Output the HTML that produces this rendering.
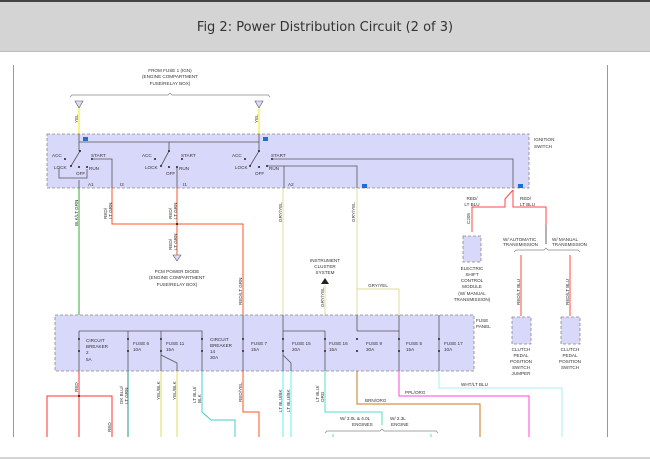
<!DOCTYPE html>
<html><head><meta charset="utf-8"><style>
html,body{margin:0;padding:0;background:#fff;width:650px;height:459px;overflow:hidden}
.hdr{position:absolute;left:0;top:0;width:650px;height:52px;background:#d4d4d4;border-top:2px solid #444;box-sizing:border-box;border-bottom:1px solid #bbb}
.hdr div{text-align:center;font:13px "DejaVu Sans","Liberation Sans",sans-serif;color:#333;margin-top:18px}
svg{position:absolute;left:0;top:0}
text{font-family:"Liberation Sans",sans-serif;font-size:4.6px;fill:#333}
</style></head><body>
<div class="hdr"><div>Fig 2: Power Distribution Circuit (2 of 3)</div></div>
<svg width="650" height="459" viewBox="0 0 650 459">
<line x1="13.5" y1="65" x2="13.5" y2="437" stroke="#999" stroke-width="1"/>
<line x1="607.5" y1="65" x2="607.5" y2="437" stroke="#999" stroke-width="1"/>
<line x1="0" y1="458" x2="650" y2="458" stroke="#aaa" stroke-width="1"/>
<text x="170" y="72" text-anchor="middle">FROM FUSE 1 (IGN)</text>
<text x="170" y="78" text-anchor="middle">(ENGINE COMPARTMENT</text>
<text x="170" y="85" text-anchor="middle">FUSE/RELAY BOX)</text>
<path d="M70 97 l2 -2 H168 l2 -2 l2 2 H268 l2 2" fill="none" stroke="#888" stroke-width="0.7"/>
<path d="M75 101 h8 l-4 7z M255 101 h8 l-4 7z" fill="#dde" stroke="#557" stroke-width="0.6"/>
<line x1="79" y1="108" x2="79" y2="134" stroke="#ee0" stroke-width="1"/>
<line x1="259" y1="108" x2="259" y2="134" stroke="#ee0" stroke-width="1"/>
<text transform="translate(78,123) rotate(-90)">YEL</text>
<text transform="translate(258,123) rotate(-90)">YEL</text>
<rect x="47" y="134" width="482" height="54" fill="#d8d8fa" stroke="#888" stroke-width="0.8" stroke-dasharray="3,2"/>
<text x="534" y="141">IGNITION</text><text x="534" y="148">SWITCH</text>
<rect x="83" y="137" width="5" height="4" fill="#1a6fd8"/><rect x="263" y="137" width="5" height="4" fill="#1a6fd8"/>
<rect x="362" y="184" width="5" height="4" fill="#1a6fd8"/><rect x="518" y="184" width="5" height="4" fill="#1a6fd8"/>
<g stroke="#555" stroke-width="0.8" fill="none">
<line x1="79" y1="142" x2="259" y2="142"/>
<line x1="79" y1="134" x2="79" y2="151"/><line x1="169" y1="142" x2="169" y2="151"/><line x1="259" y1="134" x2="259" y2="151"/>
<line x1="80" y1="151" x2="71" y2="166"/><line x1="169" y1="151" x2="161" y2="166"/><line x1="259" y1="151" x2="250" y2="166"/>
<path d="M92 159 H112 V188"/><path d="M59 168 V178 H87 V169"/>
<path d="M272 159 H513 V188"/>
<path d="M267 166 H357 V188 M284 166 V188"/>
<line x1="79" y1="180" x2="79" y2="188"/><line x1="177" y1="167" x2="177" y2="188"/>
</g>
<g fill="#222">
<circle cx="65" cy="159" r="1"/><circle cx="92" cy="159" r="1"/><circle cx="71" cy="166" r="1"/><circle cx="79" cy="167" r="1"/><circle cx="87" cy="167" r="1"/><circle cx="80" cy="151" r="1"/>
<circle cx="155" cy="159" r="1"/><circle cx="182" cy="159" r="1"/><circle cx="161" cy="166" r="1"/><circle cx="169" cy="167" r="1"/><circle cx="177" cy="167" r="1"/><circle cx="169" cy="151" r="1"/>
<circle cx="245" cy="159" r="1"/><circle cx="272" cy="159" r="1"/><circle cx="250" cy="166" r="1"/><circle cx="259" cy="167" r="1"/><circle cx="267" cy="166" r="1"/><circle cx="259" cy="151" r="1"/>
</g>
<text x="52" y="157">ACC</text><text x="91" y="157">START</text><text x="54" y="169">LOCK</text><text x="89" y="170">RUN</text><text x="76" y="175">OFF</text>
<text x="142" y="157">ACC</text><text x="181" y="157">START</text><text x="145" y="169">LOCK</text><text x="179" y="170">RUN</text><text x="166" y="175">OFF</text>
<text x="232" y="157">ACC</text><text x="271" y="157">START</text><text x="235" y="169">LOCK</text><text x="269" y="170">RUN</text><text x="255" y="175">OFF</text>
<text x="88" y="186">A1</text><text x="120" y="186">I2</text><text x="183" y="186">I1</text><text x="288" y="186">A2</text>
<g fill="none" stroke-width="1">
<line x1="79" y1="188" x2="79" y2="331" stroke="#3a3"/>
<path d="M112 188 V224 H243 V315" stroke="#f52"/>
<path d="M177 188 V255" stroke="#f52"/>
<line x1="283" y1="188" x2="283" y2="315" stroke="#dd9"/>
<line x1="357" y1="188" x2="357" y2="289" stroke="#dd9"/>
<path d="M325 285 V315" stroke="#dd9"/>
<path d="M357 315 V289 H399 V315" stroke="#dd9"/>
<path d="M513 190 L505 199 V207 H472 V232" stroke="#f44"/>
<path d="M513 190 V207 H546 V225" stroke="#f44"/>
<line x1="546" y1="225" x2="546" y2="244" stroke="#666"/>
<line x1="521" y1="255" x2="521" y2="316" stroke="#f44"/>
<line x1="570" y1="255" x2="570" y2="316" stroke="#f44"/>
</g>
<circle cx="177" cy="224" r="1.1" fill="#222"/>
<path d="M173 255 h8 l-4 6z" fill="#dde" stroke="#557" stroke-width="0.6"/>
<path d="M321 284 l4 -6 l4 6z" fill="#222"/>
<text transform="translate(78,226) rotate(-90)">BLK/LT GRN</text>
<text transform="translate(107,219) rotate(-90)">RED/</text><text transform="translate(112,219) rotate(-90)">LT GRN</text>
<text transform="translate(172,219) rotate(-90)">RED/</text><text transform="translate(177,219) rotate(-90)">LT GRN</text>
<text transform="translate(172,250) rotate(-90)">RED/</text><text transform="translate(177,250) rotate(-90)">LT GRN</text>
<text transform="translate(242,305) rotate(-90)">RED/LT GRN</text>
<text transform="translate(282,222) rotate(-90)">GRY/YEL</text>
<text transform="translate(355,222) rotate(-90)">GRY/YEL</text>
<text transform="translate(324,307) rotate(-90)">GRY/YEL</text>
<text x="378" y="287" text-anchor="middle">GRY/YEL</text>
<text x="177" y="273" text-anchor="middle">PCM POWER DIODE</text>
<text x="177" y="279" text-anchor="middle">(ENGINE COMPARTMENT</text>
<text x="177" y="286" text-anchor="middle">FUSE/RELAY BOX)</text>
<text x="325" y="262" text-anchor="middle">INSTRUMENT</text><text x="325" y="268" text-anchor="middle">CLUSTER</text><text x="325" y="274" text-anchor="middle">SYSTEM</text>
<text x="472" y="200" text-anchor="middle">RED/</text><text x="472" y="206" text-anchor="middle">LT BLU</text>
<text x="520" y="200">RED/</text><text x="520" y="206">LT BLU</text>
<text transform="translate(470,224) rotate(-90)">C205</text>
<rect x="463" y="236" width="18" height="26" fill="#d8d8fa" stroke="#888" stroke-width="0.8" stroke-dasharray="3,2"/>
<text x="472" y="270" text-anchor="middle">ELECTRIC</text><text x="472" y="276" text-anchor="middle">SHIFT</text><text x="472" y="282" text-anchor="middle">CONTROL</text><text x="472" y="288" text-anchor="middle">MODULE</text><text x="472" y="295" text-anchor="middle">(W/ MANUAL</text><text x="472" y="301" text-anchor="middle">TRANSMISSION)</text>
<text x="503" y="241">W/ AUTOMATIC</text><text x="503" y="246">TRANSMISSION</text>
<text x="552" y="241">W/ MANUAL</text><text x="552" y="246">TRANSMISSION</text>
<path d="M514 252 l2 -2 H544 l2 -2 l2 2 H578 l2 2" fill="none" stroke="#888" stroke-width="0.7"/>
<text transform="translate(520,305) rotate(-90)">RED/LT BLU</text>
<text transform="translate(569,305) rotate(-90)">RED/LT BLU</text>
<rect x="512" y="317" width="19" height="27" fill="#d8d8fa" stroke="#888" stroke-width="0.8" stroke-dasharray="3,2"/>
<rect x="561" y="317" width="19" height="27" fill="#d8d8fa" stroke="#888" stroke-width="0.8" stroke-dasharray="3,2"/>
<text x="521" y="351" text-anchor="middle">CLUTCH</text><text x="521" y="357" text-anchor="middle">PEDAL</text><text x="521" y="363" text-anchor="middle">POSITION</text><text x="521" y="369" text-anchor="middle">SWITCH</text><text x="521" y="375" text-anchor="middle">JUMPER</text>
<text x="570" y="351" text-anchor="middle">CLUTCH</text><text x="570" y="357" text-anchor="middle">PEDAL</text><text x="570" y="363" text-anchor="middle">POSITION</text><text x="570" y="369" text-anchor="middle">SWITCH</text>
<rect x="55" y="315" width="419" height="56" fill="#d8d8fa" stroke="#888" stroke-width="0.8" stroke-dasharray="3,2"/>
<text x="476" y="322">FUSE</text><text x="476" y="328">PANEL</text>
<g stroke="#555" stroke-width="0.8" fill="none">
<path d="M79 331 H202 V371 M128 331 V371 M161 331 V371 M79 331 V371"/>
<path d="M283 331 H325 V371 M283 315 V371 M243 315 V371"/>
<path d="M357 331 H399 V371 M357 315 V331 M399 315 V331 M439 315 V371"/>
<path d="M161 355 L177 363 V371 M283 355 L291 363 V371"/>
</g>
<g fill="#222">
<circle cx="79" cy="339" r="1"/><circle cx="79" cy="351" r="1"/><circle cx="128" cy="339" r="1"/><circle cx="128" cy="351" r="1"/><circle cx="161" cy="339" r="1"/><circle cx="161" cy="351" r="1"/><circle cx="202" cy="339" r="1"/><circle cx="202" cy="351" r="1"/><circle cx="243" cy="339" r="1"/><circle cx="243" cy="351" r="1"/><circle cx="283" cy="339" r="1"/><circle cx="283" cy="351" r="1"/><circle cx="325" cy="339" r="1"/><circle cx="325" cy="351" r="1"/><circle cx="357" cy="339" r="1"/><circle cx="357" cy="351" r="1"/><circle cx="399" cy="339" r="1"/><circle cx="399" cy="351" r="1"/><circle cx="439" cy="339" r="1"/><circle cx="439" cy="351" r="1"/>
</g>
<text x="86" y="342">CIRCUIT</text><text x="86" y="348">BREAKER</text><text x="86" y="354">2</text><text x="86" y="361">5A</text>
<text x="133" y="345">FUSE 6</text><text x="133" y="351">10A</text>
<text x="166" y="345">FUSE 11</text><text x="166" y="351">15A</text>
<text x="210" y="341">CIRCUIT</text><text x="210" y="347">BREAKER</text><text x="210" y="353">14</text><text x="210" y="359">30A</text>
<text x="251" y="345">FUSE 7</text><text x="251" y="351">15A</text>
<text x="292" y="345">FUSE 15</text><text x="292" y="351">20A</text>
<text x="329" y="345">FUSE 16</text><text x="329" y="351">15A</text>
<text x="366" y="345">FUSE 9</text><text x="366" y="351">30A</text>
<text x="406" y="345">FUSE 5</text><text x="406" y="351">15A</text>
<text x="444" y="345">FUSE 17</text><text x="444" y="351">10A</text>
<g fill="none" stroke-width="1">
<path d="M79 371 V437 M47 437 V396 H112 V437" stroke="#f33"/>
<line x1="128" y1="371" x2="128" y2="437" stroke="#298"/>
<line x1="161" y1="371" x2="161" y2="437" stroke="#dd6"/>
<line x1="177" y1="371" x2="177" y2="437" stroke="#dd6"/>
<path d="M202 371 V412 L211 420 H235 V437" stroke="#4cc"/>
<path d="M243 371 V412 H259 V437" stroke="#f52"/>
<line x1="283" y1="371" x2="283" y2="437" stroke="#6ee"/>
<line x1="291" y1="371" x2="291" y2="437" stroke="#6ee"/>
<path d="M325 371 V412 H382 V425" stroke="#5dc"/>
<path d="M357 371 V404 H480 V437" stroke="#c72"/>
<path d="M399 371 V396 H529 V437" stroke="#f4d"/>
<path d="M439 371 V388 H562 V437" stroke="#aee"/>
<line x1="333" y1="434" x2="333" y2="437" stroke="#5dc"/>
<line x1="431" y1="434" x2="431" y2="437" stroke="#5dc"/>
</g>
<circle cx="79" cy="396" r="1.1" fill="#222"/>
<path d="M325 433 l2 -2 H380 l2 -2 l2 2 H436 l2 2" fill="none" stroke="#888" stroke-width="0.7"/>
<text transform="translate(78,392) rotate(-90)">RED</text>
<text transform="translate(111,432) rotate(-90)">RED</text>
<text transform="translate(123,404) rotate(-90)">DK BLU/</text><text transform="translate(128,404) rotate(-90)">LT GRN</text>
<text transform="translate(160,400) rotate(-90)">YEL/BLK</text><text transform="translate(176,400) rotate(-90)">YEL/BLK</text>
<text transform="translate(196,403) rotate(-90)">LT BLU/</text><text transform="translate(201,403) rotate(-90)">BLK</text>
<text transform="translate(242,402) rotate(-90)">RED/YEL</text>
<text transform="translate(282,412) rotate(-90)">LT BLU/BK</text><text transform="translate(290,412) rotate(-90)">LT BLU/BK</text>
<text transform="translate(319,402) rotate(-90)">LT BLU/</text><text transform="translate(324,402) rotate(-90)">ORG</text>
<text x="365" y="402">BRN/ORG</text>
<text x="405" y="394">PPL/ORG</text>
<text x="461" y="386">WHT/LT BLU</text>
<text x="340" y="420">W/ 3.0L &amp; 4.0L</text><text x="352" y="426">ENGINES</text>
<text x="390" y="420">W/ 2.3L</text><text x="391" y="426">ENGINE</text>
</svg>
</body></html>
